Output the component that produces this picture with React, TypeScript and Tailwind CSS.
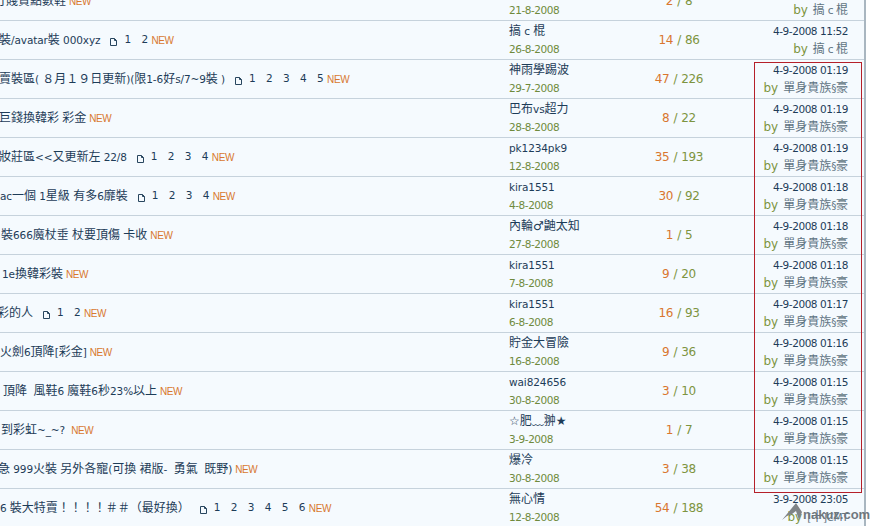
const rows = [
  { cut: '-ml-[6px]', title: '打賤貴點數鞋', pages: 0, author: '', date: '21-8-2008', a: 2, b: 8, last: '', by: '搞 c 棍' },
  { cut: '-ml-[1px]', title: '裝/avatar裝 000xyz', pages: 2, author: '搞 c 棍', date: '26-8-2008', a: 14, b: 86, last: '4-9-2008 11:52', by: '搞 c 棍' },
  { cut: '-ml-[1px]', title: '賣裝區(\u00a0８月１９日更新)(限1-6好s/7~9裝\u00a0)', pages: 5, author: '神雨學踢波', date: '29-7-2008', a: 47, b: 226, last: '4-9-2008 01:19', by: '單身貴族§豪' },
  { cut: '-ml-[1px]', title: '巨錢換韓彩 彩金', pages: 0, author: '巴布vs超力', date: '28-8-2008', a: 8, b: 22, last: '4-9-2008 01:19', by: '單身貴族§豪' },
  { cut: '-ml-[1px]', title: '妝莊區<<又更新左 22/8', pages: 4, author: 'pk1234pk9', date: '12-8-2008', a: 35, b: 193, last: '4-9-2008 01:19', by: '單身貴族§豪' },
  { cut: 'ml-0', title: 'ac一個 1星級 有多6靡裝', pages: 4, author: 'kira1551', date: '4-8-2008', a: 30, b: 92, last: '4-9-2008 01:18', by: '單身貴族§豪' },
  { cut: 'ml-[1px]', title: '裝666魔杖垂 杖要頂傷 卡收', pages: 0, author: '內輪♂鼬太知', date: '27-8-2008', a: 1, b: 5, last: '4-9-2008 01:18', by: '單身貴族§豪' },
  { cut: 'ml-[2px]', title: '1e換韓彩裝', pages: 0, author: 'kira1551', date: '7-8-2008', a: 9, b: 20, last: '4-9-2008 01:18', by: '單身貴族§豪' },
  { cut: '-ml-[3px]', title: '彩的人', pages: 2, author: 'kira1551', date: '6-8-2008', a: 16, b: 93, last: '4-9-2008 01:17', by: '單身貴族§豪' },
  { cut: 'ml-0', title: '火劍6頂降[彩金]', pages: 0, author: '貯金大冒險', date: '16-8-2008', a: 9, b: 36, last: '4-9-2008 01:16', by: '單身貴族§豪' },
  { cut: 'ml-[3px]', title: '頂降\u00a0 風鞋6 魔鞋6秒23%以上', pages: 0, author: 'wai824656', date: '30-8-2008', a: 3, b: 10, last: '4-9-2008 01:15', by: '單身貴族§豪' },
  { cut: 'ml-[1px]', title: '到彩虹~_~?\u00a0', pages: 0, author: '☆肥﹏翀★', date: '3-9-2008', a: 1, b: 7, last: '4-9-2008 01:15', by: '單身貴族§豪' },
  { cut: '-ml-[2px]', title: '急 999火裝 另外各寵(可換 裙版-\u00a0 勇氣\u00a0 既野)', pages: 0, author: '爆冷', date: '30-8-2008', a: 3, b: 38, last: '4-9-2008 01:15', by: '單身貴族§豪' },
  { cut: 'ml-0', title: '6 裝大特賣！！！！＃＃（最好換）', pages: 6, author: '無心情', date: '12-8-2008', a: 54, b: 188, last: '3-9-2008 23:05', by: '[十]CMT' },
];

// chinese runs are drawn larger than the latin around them
function Txt({ text, loose }: { text: string; loose?: boolean }) {
  return (
    <>
      {text.split(/([\u2E80-\uFFEF☆★♂]+)/).map((part, i) =>
        i % 2 ? (
          <span key={i} className="text-[12px]">
            {part}
          </span>
        ) : (
          <span key={i} className={loose ? 'tracking-[-0.1px]' : 'tracking-[-0.45px]'}>
            {part}
          </span>
        )
      )}
    </>
  );
}

function PageIcon() {
  return (
    <svg width="9" height="11" viewBox="0 0 9 11" className="mr-[6px] ml-[9px] mt-[3px] shrink-0" fill="none" stroke="#28465f">
      <path d="M1.5 2.5h4l2 2v5h-6z" />
      <path d="M5.5 2.5v2h2" />
    </svg>
  );
}

function Row({ row }: { row: (typeof rows)[number] }) {
  return (
    <div className="flex h-[39px] border-b border-[#c6d2dc] bg-[#f5fafe]">
      <div className="w-[509px] shrink-0 overflow-hidden">
        <div className={`flex h-full items-center whitespace-nowrap ${row.cut}`}>
          <span>
            <Txt text={row.title} loose />
          </span>
          {row.pages > 0 && (
            <span className="flex items-center">
              <PageIcon />
              {Array.from({ length: row.pages }, (_, i) => (
                <span key={i} className="w-[17px] shrink-0 last:w-[7px]">
                  {i + 1}
                </span>
              ))}
            </span>
          )}
          <span className="ml-[3px] font-['Liberation_Sans'] text-[10px] tracking-[-0.4px] text-[#d8782f]">NEW</span>
        </div>
      </div>
      <div className="flex w-[120px] shrink-0 flex-col justify-center gap-[4px]">
        <div className="h-[15px] leading-[15px]">
          <Txt text={row.author} loose />
        </div>
        <div className="h-[13px] leading-[13px] text-[#6f8a3c]">
          <Txt text={row.date} />
        </div>
      </div>
      <div className="flex w-[100px] shrink-0 items-center justify-center gap-[4px] text-[12px] tracking-[-0.3px] text-[#7d9440]">
        <span className="text-[#d9762f]">{row.a}</span>/<span>{row.b}</span>
      </div>
      <div className="flex w-[135px] shrink-0 flex-col items-end justify-center gap-[4px] pr-[16px]">
        <div className="h-[14px] leading-[14px]">
          <Txt text={row.last} />
        </div>
        <div className="flex h-[15px] gap-[5px] leading-[15px] text-[#5f7482]">
          <span className="text-[12px] text-[#7d9440]">by</span>
          <span>
            <Txt text={row.by} />
          </span>
        </div>
      </div>
    </div>
  );
}

export default function App() {
  return (
    <div className="relative h-[526px] w-[876px] overflow-hidden bg-white font-['DejaVu_Sans','Noto_Sans_CJK_TC',sans-serif] text-[10.5px] text-[#1d3c58]">
      <div className="-mt-[18px] w-[866px] border-r-2 border-[#a9b6c0] bg-[#f5fafe]">
        {rows.map((row, i) => (
          <Row key={i} row={row} />
        ))}
      </div>
      <div className="pointer-events-none absolute left-[754px] top-[62px] h-[431px] w-[108px] border border-[#b5202a]" />
      <div className="absolute left-[782px] top-[502px] flex items-start font-['Liberation_Sans'] text-[13px] font-bold leading-[15px] text-[#70787e]">
        <svg width="21" height="19" viewBox="0 0 21 19" fill="#7f8488">
          <path d="M0 18 14 1l6 9-3 8-3-9-4 3-5 2z" />
        </svg>
        <span className="mt-[5px]">nakuz.com</span>
      </div>
    </div>
  );
}
